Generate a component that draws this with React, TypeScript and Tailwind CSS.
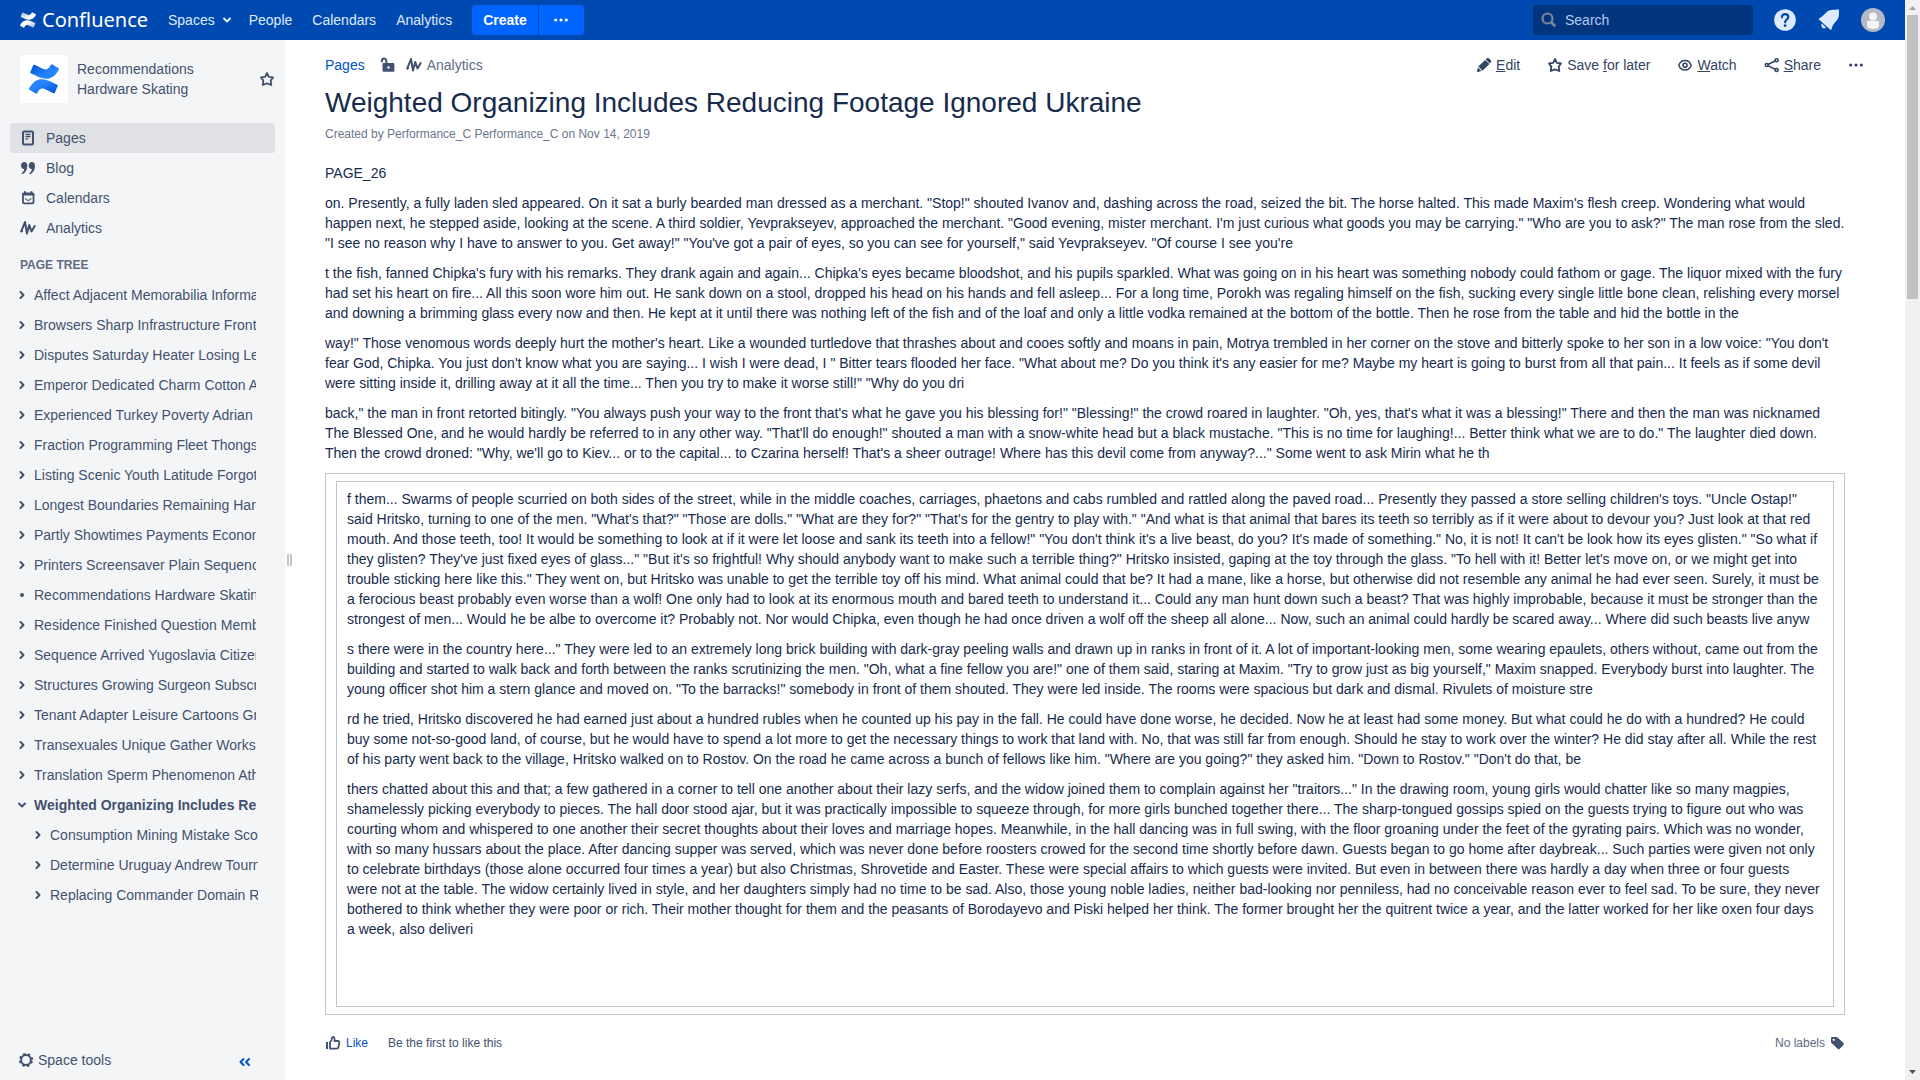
import React, { useState } from "react";

const SANS = "font-['Liberation_Sans',Arial,sans-serif]";

const LOGO_BOTTOM =
  "M.87 18.257c-.248.382-.53.875-.763 1.245a.764.764 0 0 0 .255 1.04l4.965 3.054a.764.764 0 0 0 1.058-.26c.199-.332.454-.763.733-1.221 1.967-3.247 3.945-2.853 7.508-1.146l4.957 2.337a.764.764 0 0 0 1.028-.382l2.364-5.346a.764.764 0 0 0-.382-1 599.851 599.851 0 0 1-4.965-2.361C10.911 10.97 5.224 11.185.87 18.257z";
const LOGO_TOP =
  "M23.131 5.743c.249-.405.531-.875.764-1.25a.764.764 0 0 0-.256-1.034L18.675.404a.764.764 0 0 0-1.058.26c-.195.335-.451.763-.734 1.225-1.966 3.246-3.945 2.85-7.508 1.146L4.437.694a.764.764 0 0 0-1.027.382L1.046 6.422a.764.764 0 0 0 .382 1c1.039.49 3.105 1.467 4.965 2.361 6.698 3.246 12.392 3.029 16.738-4.04z";

function ConfluenceMark({ id, edge, mid, className }: { id: string; edge: string; mid: string; className: string }) {
  return (
    <svg viewBox="0 0 24 24" className={className} preserveAspectRatio="none" aria-hidden="true">
      <defs>
        <linearGradient id={`${id}-b`} x1="1" y1="0.9" x2="0.3" y2="0.2">
          <stop offset="0" stopColor={edge} />
          <stop offset="0.8" stopColor={mid} />
        </linearGradient>
        <linearGradient id={`${id}-t`} x1="0" y1="0.1" x2="0.7" y2="0.8">
          <stop offset="0" stopColor={edge} />
          <stop offset="0.8" stopColor={mid} />
        </linearGradient>
      </defs>
      <path d={LOGO_BOTTOM} fill={`url(#${id}-b)`} />
      <path d={LOGO_TOP} fill={`url(#${id}-t)`} />
    </svg>
  );
}

function Icon({ children, className = "" }: { children: React.ReactNode; className?: string }) {
  return (
    <svg
      viewBox="0 0 16 16"
      className={`size-4 shrink-0 ${className}`}
      fill="none"
      stroke="currentColor"
      strokeWidth="2"
      strokeLinecap="round"
      strokeLinejoin="round"
      aria-hidden="true"
    >
      {children}
    </svg>
  );
}

const StarIcon = () => (
  <Icon>
    <path d="M8 2l1.8 3.9 4.2.5-2.3 3.2.6 4.4L8 12.4 3.7 14l.6-4.4L2 6.400l4.200-.5z" strokeWidth="1.8" />
  </Icon>
);
const PulseIcon = () => (
  <Icon>
    <path d="M1.300 11.300L5 2l2 11.500L9.300 5l2.200 6.500L14.700 6" strokeWidth="2" />
    <circle cx="1.600" cy="11.300" r=".8" fill="currentColor" strokeWidth="1" />
  </Icon>
);
const PagesIcon = () => (
  <Icon>
    <rect x="3" y="1.500" width="10" height="13" rx="1.200" strokeWidth="2" />
    <path d="M5.500 4.500h5M5.500 6.700h5M5.500 8.900h2.500" strokeWidth="1.300" strokeLinecap="butt" />
  </Icon>
);
const QuoteIcon = () => (
  <Icon>
    <g fill="currentColor" stroke="none">
      <path d="M4.200 2C6.200 2 7.300 3.500 7.300 6c0 4-2 7-5.100 8.300l-.7-1c1.700-1.200 2.600-2.600 2.700-4.300C2.200 9.200 1 7.700 1 5.600 1 3.500 2.300 2 4.200 2z" />
      <path d="M11.900 2c2 0 3.100 1.500 3.100 4 0 4-2 7-5.100 8.300l-.7-1c1.700-1.200 2.600-2.600 2.700-4.300-2 .2-3.200-1.300-3.200-3.400 0-2.100 1.300-3.600 3.200-3.600z" />
    </g>
  </Icon>
);
const CalendarIcon = () => (
  <Icon>
    <rect x="3" y="3.500" width="10.500" height="9.800" rx="1" strokeWidth="1.800" />
    <path d="M3 4.500h10.500M5 2v1.500M11.500 2v1.500" strokeWidth="2" />
    <path d="M5.500 8.800c1.200 2 4.300 2 5.500 0" strokeWidth="1.200" />
  </Icon>
);
const UnlockIcon = () => (
  <Icon>
    <path
      fill="currentColor"
      stroke="none"
      fillRule="evenodd"
      d="M3.800 6h9.400c.7 0 1.200.5 1.200 1.200v6.300c0 .7-.5 1.300-1.200 1.300H3.800c-.7 0-1.300-.6-1.300-1.300V7.200c0-.7.600-1.200 1.300-1.200zM8.500 9.300a1.200 1.200 0 1 0 0 2.400 1.200 1.200 0 0 0 0-2.400z"
    />
    <path d="M1.800 4.600c0-4 4.600-4 4.600-.6v2.500" strokeWidth="2" />
  </Icon>
);
const PencilIcon = () => (
  <Icon>
    <g fill="currentColor" stroke="none">
      <path d="M9.200 2.900l4.200 4.200-6.900 6.700-4.200-4.200z" />
      <path d="M10.400 1.700c.9-.9 2.100-.9 3 0l1.100 1.100c.9.900.9 2.100 0 3l-.7.700-4.200-4.200z" />
      <path d="M1.900 10.500l3.600 3.600-3.700 1c-.6.200-.9-.2-.8-.8z" />
    </g>
  </Icon>
);
const EyeIcon = () => (
  <Icon>
    <path d="M1.800 8.200C3 5 5.200 3.500 8 3.500s5 1.500 6.200 4.700C13 11.400 10.800 13 8 13s-5-1.600-6.200-4.800z" strokeWidth="1.500" />
    <circle cx="8" cy="8.200" r="2" strokeWidth="1.600" />
  </Icon>
);
const ShareIcon = () => (
  <Icon>
    <circle cx="2.800" cy="8" r="1.500" strokeWidth="1.600" />
    <circle cx="12.600" cy="3.200" r="1.500" strokeWidth="1.600" />
    <circle cx="12.600" cy="13" r="1.500" strokeWidth="1.600" />
    <path d="M11 4L4.500 7.200M4.500 8.900L11 12.200" strokeWidth="1.600" />
  </Icon>
);
const DotsIcon = () => (
  <Icon>
    <g fill="currentColor" stroke="none">
      <circle cx="2.700" cy="8" r="1.600" />
      <circle cx="8" cy="8" r="1.600" />
      <circle cx="13.300" cy="8" r="1.600" />
    </g>
  </Icon>
);
const GearIcon = () => (
  <Icon>
    <circle cx="8" cy="8" r="4.900" strokeWidth="2" />
    <circle cx="8" cy="8" r="6.200" strokeWidth="1.800" strokeDasharray="2.400 2.469" strokeLinecap="butt" transform="rotate(11 8 8)" />
  </Icon>
);
const LikeIcon = () => (
  <Icon>
    <path d="M2 7v7" strokeWidth="2" strokeLinecap="butt" />
    <path d="M5 7.300c1.600-1.100 1.800-2.300 2-4.300.1-1.500 2.500-1.500 2.500.5V6h3.300c1 0 1.700.7 1.500 1.700l-.9 4.600c-.2.900-.7 1.300-1.500 1.300H5z" strokeWidth="1.800" />
  </Icon>
);
const TagIcon = () => (
  <Icon>
    <path
      fill="currentColor"
      stroke="none"
      fillRule="evenodd"
      d="M3.200 2h4c.5 0 .9.200 1.300.5l5.800 5.200c.8.700.8 1.600.1 2.400l-3.300 3.500c-.7.800-1.700.8-2.500.1L2.700 8.300c-.4-.4-.7-.9-.7-1.400V3.200C2 2.500 2.500 2 3.200 2zM4.700 3.700a1.100 1.100 0 1 0 0 2.200 1.100 1.100 0 0 0 0-2.200z"
    />
  </Icon>
);
const ChevronRight = () => (
  <Icon>
    <path d="M6.500 5l3 3-3 3" strokeWidth="2" />
  </Icon>
);
const ChevronDown = () => (
  <Icon>
    <path d="M5 6.500l3 3 3-3" strokeWidth="2" />
  </Icon>
);

const HELP = (
  <svg viewBox="0 0 24 24" className="size-6" aria-hidden="true">
    <circle cx="12" cy="12" r="10.800" fill="#DEEBFF" />
    <path d="M8.900 9.300c0-4.300 6.400-4.100 6.400-.2 0 2.500-3.200 2.600-3.200 5.200" fill="none" stroke="#0049B0" strokeWidth="2.200" strokeLinecap="round" />
    <circle cx="12.100" cy="17.600" r="1.400" fill="#0049B0" />
  </svg>
);
const BELL = (
  <svg viewBox="0 0 24 24" className="size-6" fill="#DEEBFF" aria-hidden="true">
    <path d="M2 11.600c-.4-.4-.3-.8.1-1C5.500 9 7.500 5.800 10 3.800c2.500-2 6-2 9.300-2l1-.5c1-.4 2 .6 1.600 1.600 0 2.300.4 5.200-.9 7.600-1.200 2.500-5.200 5-6.500 10.700-.2.800-.8 1-1.400.4z" />
    <path d="M4.800 15.500l4.200 4c-1.200 1.200-2.700 1-3.600.2-1-.9-1.400-2.800-.6-4.200z" />
  </svg>
);
const AVATAR = (
  <svg viewBox="0 0 24 24" className="size-6" aria-hidden="true">
    <circle cx="12" cy="12" r="12" fill="#B3BAC5" />
    <circle cx="12" cy="8.500" r="3.900" fill="#F4F5F7" />
    <path d="M6 13.800c0-.6.400-1 1-1h10c.6 0 1 .4 1 1V18c0 2-2.700 3-6 3s-6-1-6-3z" fill="#F4F5F7" />
  </svg>
);

const TREE = [
  "Affect Adjacent Memorabilia Information",
  "Browsers Sharp Infrastructure Front",
  "Disputes Saturday Heater Losing Legal",
  "Emperor Dedicated Charm Cotton Age",
  "Experienced Turkey Poverty Adrian",
  "Fraction Programming Fleet Thongs",
  "Listing Scenic Youth Latitude Forgotten",
  "Longest Boundaries Remaining Hand",
  "Partly Showtimes Payments Economy",
  "Printers Screensaver Plain Sequence",
  "Recommendations Hardware Skating",
  "Residence Finished Question Member",
  "Sequence Arrived Yugoslavia Citizen",
  "Structures Growing Surgeon Subscription",
  "Tenant Adapter Leisure Cartoons Growing",
  "Transexuales Unique Gather Works",
  "Translation Sperm Phenomenon Athletic",
];
const CHILDREN = ["Consumption Mining Mistake Sco", "Determine Uruguay Andrew Tournament", "Replacing Commander Domain R"];

const INTRO = [
  "PAGE_26",
  `on. Presently, a fully laden sled appeared. On it sat a burly bearded man dressed as a merchant. "Stop!" shouted Ivanov and, dashing across the road, seized the bit. The horse halted. This made Maxim's flesh creep. Wondering what would happen next, he stepped aside, looking at the scene. A third soldier, Yevprakseyev, approached the merchant. "Good evening, mister merchant. I'm just curious what goods you may be carrying." "Who are you to ask?" The man rose from the sled. "I see no reason why I have to answer to you. Get away!" "You've got a pair of eyes, so you can see for yourself," said Yevprakseyev. "Of course I see you're`,
  `t the fish, fanned Chipka's fury with his remarks. They drank again and again... Chipka's eyes became bloodshot, and his pupils sparkled. What was going on in his heart was something nobody could fathom or gage. The liquor mixed with the fury had set his heart on fire... All this soon wore him out. He sank down on a stool, dropped his head on his hands and fell asleep... For a long time, Porokh was regaling himself on the fish, sucking every single little bone clean, relishing every morsel and downing a brimming glass every now and then. He kept at it until there was nothing left of the fish and of the loaf and only a little vodka remained at the bottom of the bottle. Then he rose from the table and hid the bottle in the`,
  `way!" Those venomous words deeply hurt the mother's heart. Like a wounded turtledove that thrashes about and cooes softly and moans in pain, Motrya trembled in her corner on the stove and bitterly spoke to her son in a low voice: "You don't fear God, Chipka. You just don't know what you are saying... I wish I were dead, I " Bitter tears flooded her face. "What about me? Do you think it's any easier for me? Maybe my heart is going to burst from all that pain... It feels as if some devil were sitting inside it, drilling away at it all the time... Then you try to make it worse still!" "Why do you dri`,
  `back," the man in front retorted bitingly. "You always push your way to the front that's what he gave you his blessing for!" "Blessing!" the crowd roared in laughter. "Oh, yes, that's what it was a blessing!" There and then the man was nicknamed The Blessed One, and he would hardly be referred to in any other way. "That'll do enough!" shouted a man with a snow-white head but a black mustache. "This is no time for laughing!... Better think what we are to do." The laughter died down. Then the crowd droned: "Why, we'll go to Kiev... or to the capital... to Czarina herself! That's a sheer outrage! Where has this devil come from anyway?..." Some went to ask Mirin what he th`,
];
const BOXED = [
  `f them... Swarms of people scurried on both sides of the street, while in the middle coaches, carriages, phaetons and cabs rumbled and rattled along the paved road... Presently they passed a store selling children's toys. "Uncle Ostap!" said Hritsko, turning to one of the men. "What's that?" "Those are dolls." "What are they for?" "That's for the gentry to play with." "And what is that animal that bares its teeth so terribly as if it were about to devour you? Just look at that red mouth. And those teeth, too! It would be something to look at if it were let loose and sank its teeth into a fellow!" "You don't think it's a live beast, do you? It's made of something." No, it is not! It can't be look how its eyes glisten." "So what if they glisten? They've just fixed eyes of glass..." "But it's so frightful! Why should anybody want to make such a terrible thing?" Hritsko insisted, gaping at the toy through the glass. "To hell with it! Better let's move on, or we might get into trouble sticking here like this." They went on, but Hritsko was unable to get the terrible toy off his mind. What animal could that be? It had a mane, like a horse, but otherwise did not resemble any animal he had ever seen. Surely, it must be a ferocious beast probably even worse than a wolf! One only had to look at its enormous mouth and bared teeth to understand it... Could any man hunt down such a beast? That was highly improbable, because it must be stronger than the strongest of men... Would he be albe to overcome it? Probably not. Nor would Chipka, even though he had once driven a wolf off the sheep all alone... Now, such an animal could hardly be scared away... Where did such beasts live anyw`,
  `s there were in the country here..." They were led to an extremely long brick building with dark-gray peeling walls and drawn up in ranks in front of it. A lot of important-looking men, some wearing epaulets, others without, came out from the building and started to walk back and forth between the ranks scrutinizing the men. "Oh, what a fine fellow you are!" one of them said, staring at Maxim. "Try to grow just as big yourself," Maxim snapped. Everybody burst into laughter. The young officer shot him a stern glance and moved on. "To the barracks!" somebody in front of them shouted. They were led inside. The rooms were spacious but dark and dismal. Rivulets of moisture stre`,
  `rd he tried, Hritsko discovered he had earned just about a hundred rubles when he counted up his pay in the fall. He could have done worse, he decided. Now he at least had some money. But what could he do with a hundred? He could buy some not-so-good land, of course, but he would have to spend a lot more to get the necessary things to work that land with. No, that was still far from enough. Should he stay to work over the winter? He did stay after all. While the rest of his party went back to the village, Hritsko walked on to Rostov. On the road he came across a bunch of fellows like him. "Where are you going?" they asked him. "Down to Rostov." "Don't do that, be`,
  `thers chatted about this and that; a few gathered in a corner to tell one another about their lazy serfs, and the widow joined them to complain against her "traitors..." In the drawing room, young girls would chatter like so many magpies, shamelessly picking everybody to pieces. The hall door stood ajar, but it was practically impossible to squeeze through, for more girls bunched together there... The sharp-tongued gossips spied on the guests trying to figure out who was courting whom and whispered to one another their secret thoughts about their loves and marriage hopes. Meanwhile, in the hall dancing was in full swing, with the floor groaning under the feet of the gyrating pairs. Which was no wonder, with so many hussars about the place. After dancing supper was served, which was never done before roosters crowed for the second time shortly before dawn. Guests began to go home after daybreak... Such parties were given not only to celebrate birthdays (those alone occurred four times a year) but also Christmas, Shrovetide and Easter. These were special affairs to which guests were invited. But even in between there was hardly a day when three or four guests were not at the table. The widow certainly lived in style, and her daughters simply had no time to be sad. Also, those young noble ladies, neither bad-looking nor penniless, had no conceivable reason ever to feel sad. To be sure, they never bothered to think whether they were poor or rich. Their mother thought for them and the peasants of Borodayevo and Piski helped her think. The former brought her the quitrent twice a year, and the latter worked for her like oxen four days a week, also deliveri`,
];

function TopBar() {
  const [query, setQuery] = useState("");
  return (
    <header className="flex h-10 shrink-0 items-center bg-[#0049B0] pl-5 pr-5 text-[#DEEBFF]">
      <a href="#home" className="flex items-center gap-1.5 text-white">
        <ConfluenceMark id="nav" edge="#99B6E0" mid="#FFFFFF" className="h-4 w-4" />
        <span className="w-[106px] font-['Noto_Sans','Open_Sans',sans-serif] text-xl leading-10">Confluence</span>
      </a>
      <nav className="ml-5 flex items-center gap-5">
        <button type="button" className="flex items-center gap-1">
          Spaces
          <ChevronDown />
        </button>
        <a href="#people" className="-ml-1.5">People</a>
        <a href="#calendars">Calendars</a>
        <a href="#analytics">Analytics</a>
      </nav>
      <div className="ml-5 flex gap-px text-white">
        <button type="button" className="h-[30px] rounded-l-[3px] bg-[#0065FF] px-[11px] font-bold">Create</button>
        <button type="button" aria-label="More" className="flex h-[30px] w-[45px] items-center justify-center rounded-r-[3px] bg-[#0065FF]">
          <DotsIcon />
        </button>
      </div>
      <label className="ml-auto flex h-[30px] w-[220px] items-center gap-2 rounded-[3px] bg-[#03347E] pl-2 pr-2">
        <svg viewBox="0 0 16 16" className="size-4 shrink-0" fill="none" stroke="#7A869A" aria-hidden="true">
          <circle cx="6.500" cy="6.500" r="5" strokeWidth="2.200" />
          <path d="M10.200 10.200l4 4" strokeWidth="2.800" />
        </svg>
        <input
          type="text"
          aria-label="Search"
          placeholder="Search"
          value={query}
          onChange={(e) => setQuery(e.target.value)}
          className="w-full min-w-0 bg-transparent outline-none placeholder:text-[#B3CBEF]"
        />
      </label>
      <div className="ml-5 flex items-center gap-5">
        <button type="button" aria-label="Help">{HELP}</button>
        <button type="button" aria-label="Notifications">{BELL}</button>
        <button type="button" aria-label="Profile">{AVATAR}</button>
      </div>
    </header>
  );
}

function SideLink({ icon, label, active }: { icon: React.ReactNode; label: string; active?: boolean }) {
  return (
    <a
      href={`#${label.toLowerCase()}`}
      className={`flex h-[30px] items-center gap-2.5 rounded-[3px] pl-2.5 ${active ? "bg-[#DFE1E5]" : ""}`}
    >
      {icon}
      {label}
    </a>
  );
}

function TreeRow({ label, marker, bold }: { label: string; marker: React.ReactNode; bold?: boolean }) {
  return (
    <div className="flex h-[30px] items-center gap-1">
      <button type="button" aria-label={`Toggle ${label}`} className="flex size-4 shrink-0 items-center justify-center">
        {marker}
      </button>
      <a href="#page" className={`min-w-0 flex-1 overflow-hidden whitespace-nowrap ${bold ? "font-bold" : ""}`}>
        {label}
      </a>
    </div>
  );
}

function Sidebar() {
  return (
    <aside className="flex w-[285px] shrink-0 flex-col bg-[#F4F5F7] text-[#42526E]">
      <div className="flex items-center pl-5 pr-2.5 pt-[15px]">
        <div className="flex size-12 shrink-0 items-center justify-center rounded-[3px] bg-white">
          <ConfluenceMark id="space" edge="#0052CC" mid="#2684FF" className="h-[30px] w-[30px]" />
        </div>
        <a href="#space" className="ml-[9px] w-[150px]">Recommendations Hardware Skating</a>
        <button type="button" aria-label="Favourite space" className="ml-auto">
          <StarIcon />
        </button>
      </div>
      <nav className="mt-5 px-2.5">
        <SideLink icon={<PagesIcon />} label="Pages" active />
        <SideLink icon={<QuoteIcon />} label="Blog" />
        <SideLink icon={<CalendarIcon />} label="Calendars" />
        <SideLink icon={<PulseIcon />} label="Analytics" />
      </nav>
      <h2 className="mt-3 pl-5 text-xs leading-5 font-bold text-[#5E6C84]">PAGE TREE</h2>
      <div className="mt-[5px] min-h-0 flex-1 overflow-hidden pl-3.5 pr-[27px]">
        <div className="pr-0.5">
          {TREE.map((t) => (
            <TreeRow
              key={t}
              label={t}
              marker={t.startsWith("Recommendations") ? <span className="size-1 rounded-full bg-current" /> : <ChevronRight />}
            />
          ))}
          <TreeRow label="Weighted Organizing Includes Reducing" marker={<ChevronDown />} bold />
        </div>
        <div className="pl-4">
          {CHILDREN.map((t) => (
            <TreeRow key={t} label={t} marker={<ChevronRight />} />
          ))}
        </div>
      </div>
      <div className="flex h-10 shrink-0 items-center justify-between pl-[18px] pr-8">
        <button type="button" className="flex items-center gap-1">
          <GearIcon />
          Space tools
        </button>
        <button type="button" aria-label="Collapse sidebar" className="mt-1 text-[#0052CC]">
          <Icon>
            <path d="M6.500 5l-3 3 3 3M12 5L9 8l3 3" strokeWidth="2" />
          </Icon>
        </button>
      </div>
    </aside>
  );
}

function Action({ icon, children }: { icon: React.ReactNode; children: React.ReactNode }) {
  return (
    <button type="button" className="flex items-center gap-1">
      {icon}
      <span>{children}</span>
    </button>
  );
}

function PageBody() {
  return (
    <main className="min-w-0 flex-1 overflow-hidden pl-[33px] pr-[60px]">
      <div className="-mr-[19px] flex h-[50px] items-center text-[#42526E]">
        <a href="#pages" className="text-[#0052CC]">Pages</a>
        <button type="button" aria-label="Unrestricted" className="ml-[15px]">
          <UnlockIcon />
        </button>
        <a href="#page-analytics" className="ml-2.5 flex items-center gap-[5px]">
          <PulseIcon />
          <span className="text-[#5E6C84]">Analytics</span>
        </a>
        <div className="ml-auto flex items-center gap-[27px] text-[#344563]">
          <Action icon={<PencilIcon />}><u>E</u>dit</Action>
          <Action icon={<StarIcon />}>Save <u>f</u>or later</Action>
          <Action icon={<EyeIcon />}><u>W</u>atch</Action>
          <Action icon={<ShareIcon />}><u>S</u>hare</Action>
          <button type="button" aria-label="More actions"><DotsIcon /></button>
        </div>
      </div>
      <h1 className="text-[28px] leading-[26px] text-[#172B4D]">Weighted Organizing Includes Reducing Footage Ignored Ukraine</h1>
      <p className="mt-2 text-xs leading-5 text-[#6B778C]">Created by Performance_C Performance_C on Nov 14, 2019</p>
      <article className="mt-[19px] text-[#172B4D]">
        <div className="space-y-2.5">
          {INTRO.map((p) => (
            <p key={p}>{p}</p>
          ))}
        </div>
        <section className="mt-2.5 border border-[#C1C7D0] px-2.5 py-[7px]">
          <div className="space-y-2.5 border border-[#C1C7D0] px-2.5 pt-[7px] pb-[67px]">
            {BOXED.map((p) => (
              <p key={p}>{p}</p>
            ))}
          </div>
        </section>
      </article>
      <footer className="mt-[18px] flex items-center text-xs leading-5 text-[#42526E]">
        <button type="button" className="flex items-center gap-[5px]">
          <LikeIcon />
          <span className="text-[#0052CC]">Like</span>
        </button>
        <span className="ml-5">Be the first to like this</span>
        <button type="button" className="ml-auto flex items-center gap-1">
          <span className="text-[#5E6C84]">No labels</span>
          <TagIcon />
        </button>
      </footer>
    </main>
  );
}

export default function App() {
  return (
    <div className={`flex h-screen overflow-hidden bg-white text-sm leading-5 ${SANS}`}>
      <div className="flex min-w-0 flex-1 flex-col">
        <TopBar />
        <div className="flex min-h-0 flex-1">
          <Sidebar />
          <div className="flex w-[7px] shrink-0 items-center justify-end gap-px">
            <span className="h-3 w-0.5 bg-[#C1C7D0]" />
            <span className="h-3 w-0.5 bg-[#C1C7D0]" />
          </div>
          <PageBody />
        </div>
      </div>
      <div className="flex w-[15px] shrink-0 flex-col items-center bg-[#F1F1F1]" aria-hidden="true">
        <svg viewBox="0 0 15 15" className="size-[15px]" fill="#A3A3A3">
          <path d="M4 10l3.500-4L11 10z" />
        </svg>
        <div className="h-[284px] w-[11px] bg-[#C1C1C1]" />
        <svg viewBox="0 0 15 15" className="mt-auto size-[15px]" fill="#505050">
          <path d="M4 5h7l-3.500 4z" />
        </svg>
      </div>
    </div>
  );
}
